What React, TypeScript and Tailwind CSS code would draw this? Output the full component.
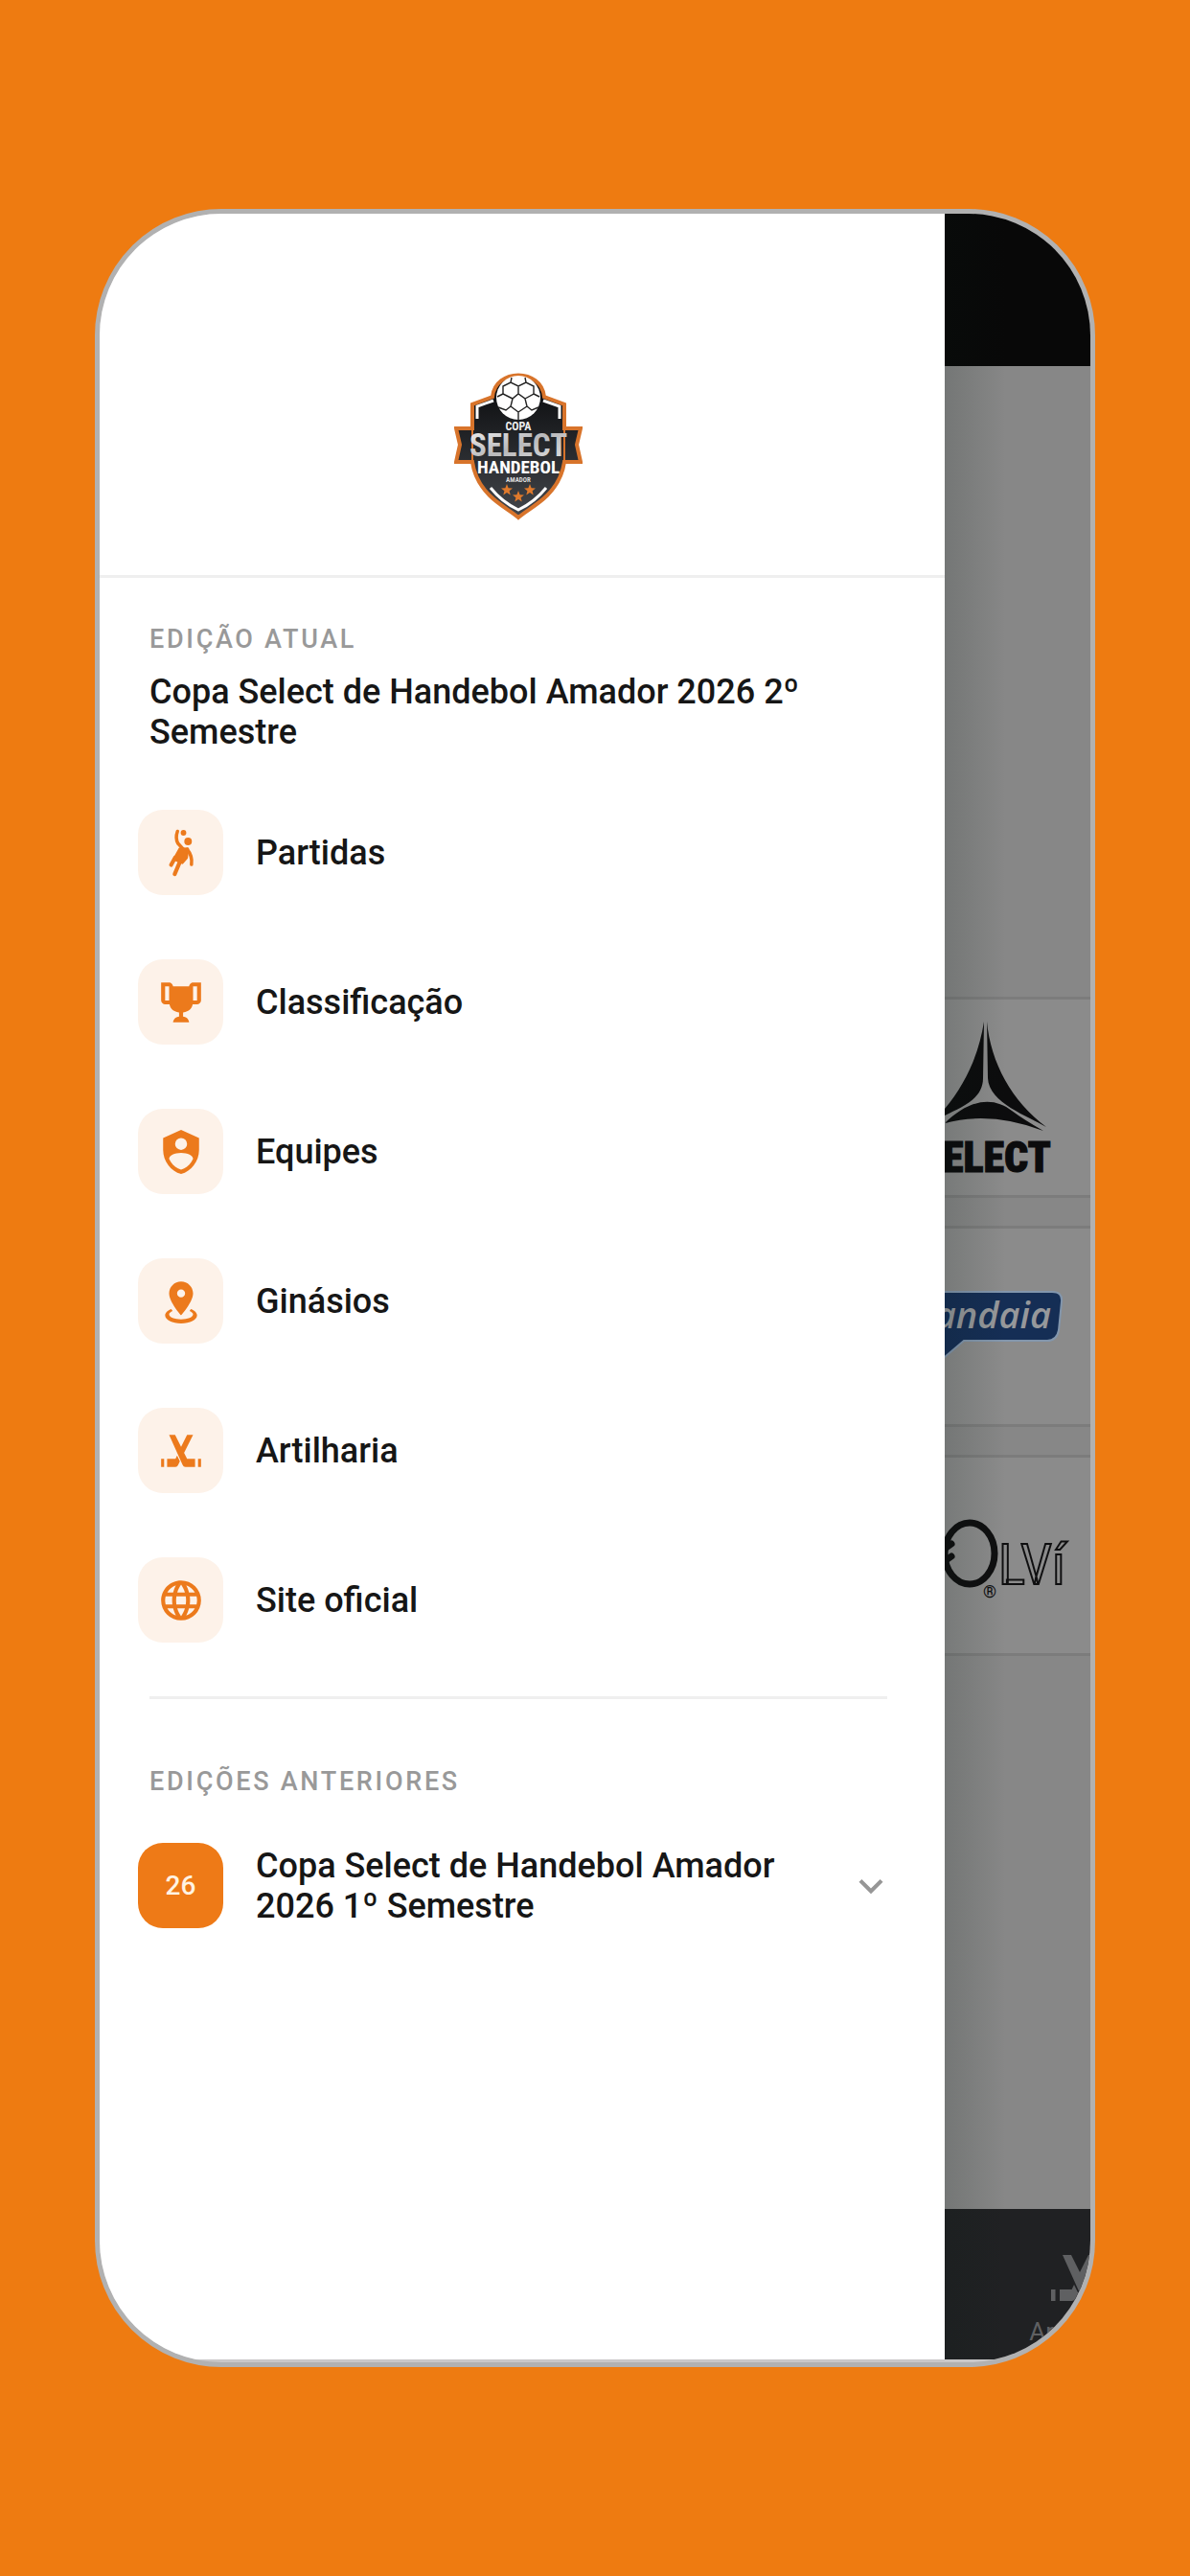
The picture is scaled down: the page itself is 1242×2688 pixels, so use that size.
import type { ReactNode } from 'react';

const ICONS = {
  trophy:
    'M18 2C17.1 2 16 3 16 4H8C8 3 6.9 2 6 2H2V11C2 12 3 13 4 13H6.2C6.6 15 7.9 16.7 11 17V19.08C8 19.54 8 22 8 22H16C16 22 16 19.54 13 19.08V17C16.1 16.7 17.4 15 17.8 13H20C21 13 22 12 22 11V2H18M6 11H4V4H6V11M20 11H18V4H20V11Z',
  shield:
    'M12,1L3,5V11C3,16.55 6.84,21.74 12,23C17.16,21.74 21,16.55 21,11V5L12,1M12,5A3,3 0 0,1 15,8A3,3 0 0,1 12,11A3,3 0 0,1 9,8A3,3 0 0,1 12,5M17.13,17C15.92,18.85 14.11,20.24 12,20.92C9.89,20.24 8.08,18.85 6.87,17C6.53,16.5 6.24,16 6,15.47C6,13.82 8.71,12.47 12,12.47C15.29,12.47 18,13.79 18,15.47C17.76,16 17.47,16.5 17.13,17Z',
  marker:
    'M12,2C15.31,2 18,4.66 18,7.95C18,12.41 12,19 12,19C12,19 6,12.41 6,7.95C6,4.66 8.69,2 12,2M12,6A2,2 0 0,0 10,8A2,2 0 0,0 12,10A2,2 0 0,0 14,8A2,2 0 0,0 12,6M20,19C20,21.21 16.42,23 12,23C7.58,23 4,21.21 4,19C4,17.71 5.22,16.56 7.11,15.83L7.75,16.74C6.67,17.19 6,17.81 6,18.5C6,19.88 8.69,21 12,21C15.31,21 18,19.88 18,18.5C18,17.81 17.33,17.19 16.25,16.74L16.89,15.83C18.78,16.56 20,17.71 20,19Z',
  sticks:
    'M2 16H3.5V20H2V16M20.5 16H22V20H20.5V16M5 16H9.2L10 14.3L11.4 17.2L10.5 19.1C10.2 19.7 9.8 20 9.2 20H5V16M6 4H9L12 10L15 4H18L13.5 13L15 16H19V20H14.2C13.5 20 13.1 19.7 12.8 19.1L6 4Z',
  web: 'M16.36,14C16.44,13.34 16.5,12.68 16.5,12C16.5,11.32 16.44,10.66 16.36,10H19.74C19.9,10.64 20,11.31 20,12C20,12.69 19.9,13.36 19.74,14M14.59,19.56C15.19,18.45 15.65,17.25 15.97,16H18.92C17.96,17.65 16.43,18.93 14.59,19.56M14.34,14H9.66C9.56,13.34 9.5,12.68 9.5,12C9.5,11.32 9.56,10.65 9.66,10H14.34C14.43,10.65 14.5,11.32 14.5,12C14.5,12.68 14.43,13.34 14.34,14M12,19.96C11.17,18.76 10.5,17.43 10.09,16H13.91C13.5,17.43 12.83,18.76 12,19.96M8,8H5.08C6.03,6.34 7.57,5.06 9.4,4.44C8.8,5.55 8.35,6.75 8,8M5.08,16H8C8.35,17.25 8.8,18.45 9.4,19.56C7.57,18.93 6.03,17.65 5.08,16M4.26,14C4.1,13.36 4,12.69 4,12C4,11.31 4.1,10.64 4.26,10H7.64C7.56,10.66 7.5,11.32 7.5,12C7.5,12.68 7.56,13.34 7.64,14M12,4.03C12.83,5.23 13.5,6.57 13.91,8H10.09C10.5,6.57 11.17,5.23 12,4.03M18.92,8H15.97C15.65,6.75 15.19,5.55 14.59,4.44C16.43,5.07 17.96,6.34 18.92,8M12,2C6.47,2 2,6.5 2,12A10,10 0 0,0 12,22A10,10 0 0,0 22,12A10,10 0 0,0 12,2Z',
};

function Icon({ d, className }: { d: string; className: string }) {
  return (
    <svg viewBox="0 0 24 24" fill="currentColor" className={className} aria-hidden="true">
      <path d={d} />
    </svg>
  );
}

function HandballIcon({ className }: { className: string }) {
  return (
    <svg
      viewBox="0 0 24 24"
      fill="none"
      stroke="currentColor"
      strokeLinecap="round"
      strokeLinejoin="round"
      className={className}
      aria-hidden="true"
    >
      <circle cx="13.2" cy="1.9" r="1.4" fill="currentColor" stroke="none" />
      <circle cx="15.5" cy="6.2" r="1.9" fill="currentColor" stroke="none" />
      <path d="M10.2 1.2Q9 4.5 10.4 7.2L13 10" strokeWidth="1.7" />
      <path d="M11.4 9.8L15.4 10L14.8 14.5L12.6 17L8.4 15.2Z" fill="currentColor" strokeWidth="1.2" />
      <path d="M15 10.2Q17.8 13.5 17.2 17.8" strokeWidth="1.7" />
      <path d="M9 14.4L7 18" strokeWidth="2" />
      <path d="M11.6 16L8.8 22.6" strokeWidth="2" />
    </svg>
  );
}

const NARROW = "font-['Roboto_Condensed','Liberation_Sans_Narrow','Liberation_Sans',sans-serif]";

function Crest() {
  return (
    <svg viewBox="33 18 134 156" className={`h-[156px] w-[134px] ${NARROW}`} role="img" aria-label="Copa Select Handebol">
      <defs>
        <linearGradient id="steel" x1="0" y1="0" x2="1" y2="1">
          <stop offset="0" stopColor="#f4f4f4" />
          <stop offset=".5" stopColor="#b9b9bb" />
          <stop offset="1" stopColor="#e4e4e4" />
        </linearGradient>
        <linearGradient id="shield" x1="0" y1="0" x2="0" y2="1">
          <stop offset="0" stopColor="#08090b" />
          <stop offset="1" stopColor="#43464b" />
        </linearGradient>
      </defs>
      <path
        d="M52 77H35L39 94L35 112H52C54 126 60 137 70 147C80 157 92 163 100 170C108 163 120 157 130 147C140 137 146 126 148 112H165L161 94L165 77H148V52L127 44C124 14 76 14 73 44L52 52Z"
        fill="url(#shield)"
        stroke="#d8742b"
        strokeWidth="4"
      />
      <path d="M52 77V112M148 77V112" stroke="#d8742b" strokeWidth="2" />
      <circle cx="100" cy="45" r="23" fill="#fff" />
      <path
        d="M100 60L92 54L94 46L100 41L107 46L109 54Z M94 46L84 41V33L92 29L100 33L108 29L116 33V41L107 46M100 33V41M92 54L87 58L79 55M109 54L114 58L121 55M100 60V68M84 41L78 44M116 41L122 44M92 29L93 24M108 29L107 24"
        fill="none"
        stroke="#222"
        strokeWidth="1.4"
      />
      <path d="M57 67V54L74 48M143 67V54L126 48" fill="none" stroke="#fff" strokeWidth="3" />
      <path d="M71 139Q83 154 100 162Q117 154 129 139" fill="none" stroke="#fff" strokeWidth="3" />
      <text x="100" y="79" textAnchor="middle" fontSize="12" fontWeight="700" fill="#eee">COPA</text>
      <text x="100" y="106" textAnchor="middle" fontSize="33" fontWeight="700" fill="url(#steel)">SELECT</text>
      <text x="100" y="124" textAnchor="middle" fontSize="19" fontWeight="700" fill="#fff">HANDEBOL</text>
      <text x="100" y="133" textAnchor="middle" fontSize="7" fontWeight="700" fill="#ddd">AMADOR</text>
      <g fill="#e07a2c">
        {['translate(88 141)', 'translate(112 141)', 'translate(100 148)'].map((t) => (
          <path key={t} transform={t} d="M0 -6L1.6 -1.8L6 -1.6L2.6 1.2L3.7 5.4L0 3L-3.7 5.4L-2.6 1.2L-6 -1.6L-1.6 -1.8Z" />
        ))}
      </g>
    </svg>
  );
}

function SelectLogo() {
  return (
    <svg viewBox="0 0 152 204" className={`h-[204px] w-[152px] ${NARROW}`} role="img" aria-label="Select">
      <g fill="#0c0c0d">
        <path d="M41 23C36 56 22 88 0 114V121C18 112 40 104 40 82Z" />
        <path d="M44 23C48 66 70 106 106 133C88 122 46 108 45 82Z" />
        <path d="M0 129C28 102 52 102 70 116Q82 125 103 137Q48 116 0 129Z" />
      </g>
      <text x="111" y="180" textAnchor="end" fontSize="44" fontWeight="900" fill="#0c0c0d" stroke="#0c0c0d" strokeWidth="1">ELECT</text>
    </svg>
  );
}

function AndaiaLogo() {
  return (
    <svg viewBox="0 0 152 204" className="h-[204px] w-[152px] font-['Open_Sans',sans-serif]" role="img" aria-label="Jandaia">
      <path d="M-6 66H112Q123 66 122 76L119 106Q117 117 107 117H20L0 134H-6Z" fill="#152e55" stroke="#8296ad" strokeWidth="2" />
      <text x="111" y="104" textAnchor="end" fontSize="38" fontStyle="italic" fontWeight="600" fill="#96989b">andaia</text>
    </svg>
  );
}

function OlviLogo() {
  return (
    <svg viewBox="0 0 152 204" className={`h-[204px] w-[152px] ${NARROW}`} role="img" aria-label="Olvi">
      <ellipse cx="26" cy="100" rx="26" ry="32" fill="none" stroke="#0f0f10" strokeWidth="7" />
      <path d="M0 95L7 90M0 108L7 103" stroke="#0f0f10" strokeWidth="7" strokeLinecap="round" />
      <text x="47" y="146" textAnchor="middle" fontSize="18" fontWeight="700" fill="#0f0f10">®</text>
      <text x="56" y="132" fontSize="59" fill="none" stroke="#0f0f10" strokeWidth="2">LVí</text>
    </svg>
  );
}

function SponsorCard({ children }: { children: ReactNode }) {
  return <div className="h-[210px] border-y-3 border-[#7c7c7c] bg-[#8b8b8b]">{children}</div>;
}

const tile = 'flex size-[89px] shrink-0 items-center justify-center rounded-[26px]';
const label = 'text-[27px] leading-9 font-medium tracking-widest text-[#999]';
const title = 'text-[36px] leading-[42px] font-medium';

const items = [
  { name: 'Partidas', icon: <HandballIcon className="size-[50px]" /> },
  { name: 'Classificação', icon: <Icon d={ICONS.trophy} className="size-[50px]" /> },
  { name: 'Equipes', icon: <Icon d={ICONS.shield} className="size-[50px]" /> },
  { name: 'Ginásios', icon: <Icon d={ICONS.marker} className="size-[50px]" /> },
  { name: 'Artilharia', icon: <Icon d={ICONS.sticks} className="size-[50px]" /> },
  { name: 'Site oficial', icon: <Icon d={ICONS.web} className="size-[50px]" /> },
];

function Drawer() {
  return (
    <aside className="min-w-0 flex-1 bg-white">
      <header className="flex justify-center border-b-3 border-[#efefef] pt-[165px] pr-2 pb-14">
        <Crest />
      </header>

      <div className="px-10 pt-[46px]">
        <div className="px-3">
          <p className={label}>EDIÇÃO ATUAL</p>
          <h1 className={`mt-4 ${title}`}>Copa Select de Handebol Amador 2026 2º Semestre</h1>
        </div>

        <nav className="mt-[60px] flex flex-col gap-[67px]">
          {items.map((item) => (
            <a key={item.name} href="#" className="flex items-center gap-[34px]">
              <span className={`${tile} bg-[#fdf2e9] text-[#ec7a1c]`}>{item.icon}</span>
              <span className={title}>{item.name}</span>
            </a>
          ))}
        </nav>

        <hr className="mt-14 mr-5 ml-3 border-t-3 border-[#efefef]" />

        <p className={`mt-[68px] px-3 ${label}`}>EDIÇÕES ANTERIORES</p>
        <button type="button" className="mt-[46px] flex w-full items-center gap-[34px] pr-3 text-left">
          <span className={`${tile} bg-[#ee7a17] text-[28px] font-medium text-[#fff3e3]`}>26</span>
          <span className={`flex-1 ${title}`}>Copa Select de Handebol Amador 2026 1º Semestre</span>
          <Icon
            d="M7.4 8.6L12 13.2L16.6 8.6L18 10L12 16L6 10Z"
            className="size-[50px] shrink-0 text-[#969696]"
          />
        </button>
      </div>
    </aside>
  );
}

// Page left dimmed behind the open drawer
function Backdrop() {
  return (
    <div className="relative flex w-[152px] shrink-0 flex-col overflow-hidden">
      <div className="h-[159px] bg-[#080808]" />
      <main className="flex flex-1 flex-col gap-[29px] bg-[#878787] pt-[658px]">
        <SponsorCard>
          <SelectLogo />
        </SponsorCard>
        <SponsorCard>
          <AndaiaLogo />
        </SponsorCard>
        <SponsorCard>
          <OlviLogo />
        </SponsorCard>
      </main>
      <footer className="h-[157px] bg-[#202123] pt-9 pl-[85px] text-[#5f6062]">
        <a href="#" className="flex w-28 flex-col items-center">
          <Icon d={ICONS.sticks} className="size-[72px]" />
          <span className="mt-1 text-[26px] leading-8">Artilharia</span>
        </a>
      </footer>
      <div className="pointer-events-none absolute inset-y-0 left-0 w-16 bg-linear-to-r from-[#0a1a14]/15 to-transparent" />
    </div>
  );
}

export default function App() {
  return (
    <div className="flex min-h-screen flex-col bg-[#ee7b11] px-[99px] py-[218px] font-['Roboto',sans-serif] text-[#161616]">
      <div className="flex flex-1 overflow-hidden rounded-[132px] border-5 border-[#b1b1b1] bg-[#c9c7c8] pb-[3px]">
        <Drawer />
        <Backdrop />
      </div>
    </div>
  );
}
